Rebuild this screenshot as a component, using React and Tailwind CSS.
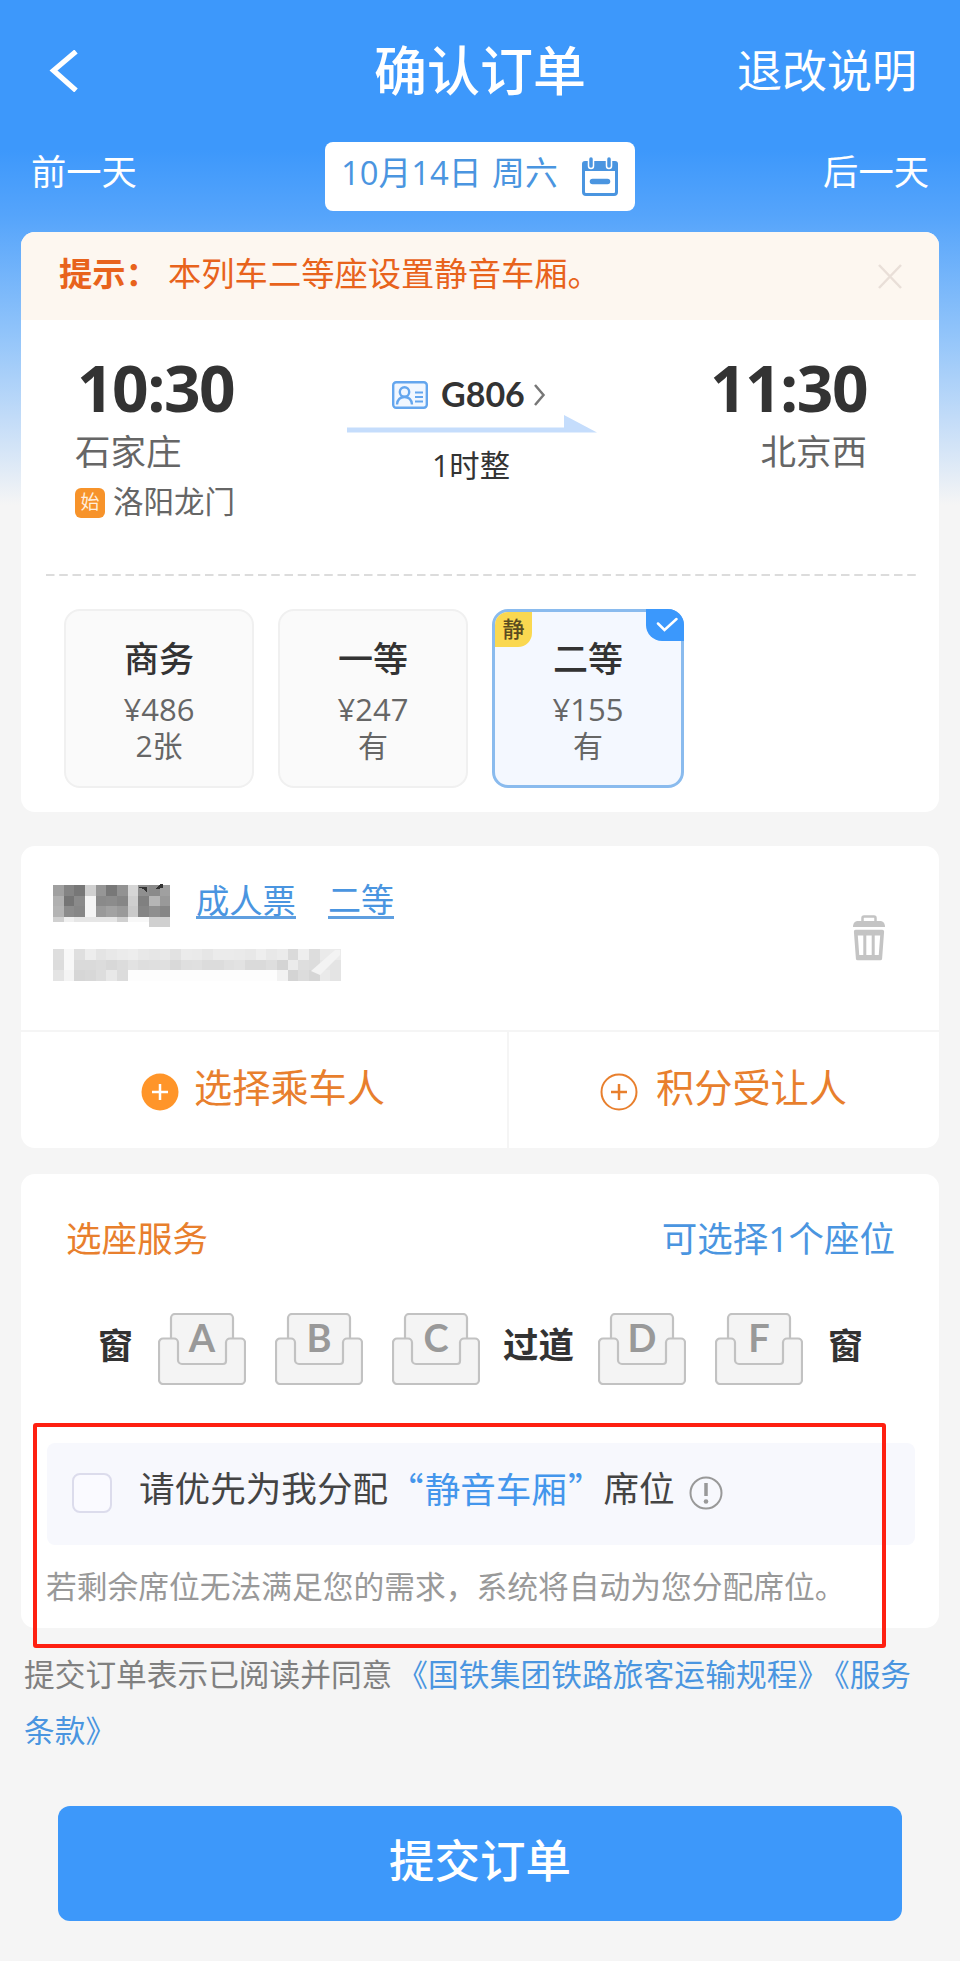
import React from 'react';

const seats = [
  { name: '商务', price: '¥486', left: '2张' },
  { name: '一等', price: '¥247', left: '有' },
  { name: '二等', price: '¥155', left: '有', quiet: true, selected: true },
];

// greys of the masked passenger name and id number, one entry per block
const nameMask = [
  ['#a0a0a0', '#848484', '#777777', '#d0d0d0', '#969696', '#787878', '#929292', '#d6d6d6', '#8f8f8f', '#8a8a8a', '#a0a0a0'],
  ['#b0b0b0', '#757575', '#8a8a8a', '#f5f5f5', '#8a8a8a', '#8c8c8c', '#868686', '#cfcfcf', '#808080', '#b5b5b5', '#999999'],
  ['#b4b4b4', '#8c8c8c', '#878787', '#f5f5f5', '#9a9a9a', '#a2a2a2', '#9a9a9a', '#cacaca', '#858585', '#8f8f8f', '#868686'],
];
const nameMaskTail = ['#d0d0d0', '#f0f0f0', '#e6e6e6', '#e6e6e6', '#e6e6e6', '#e6e6e6', '#d0d0d0', '#f8f8f8', '#f8f8f8', '#d0d0d0', '#d0d0d0'];
const idMask = [
  ['#dedede', '#f8f8f8', '#dfdfdf', '#ededed', '#e4e4e4', '#e8e8e8', '#ebebeb', '#ededed', '#e8e8e8', '#e6e6e6', '#e8e8e8', '#e2e2e2', '#ebebeb', '#eaeaea', '#e6e6e6', '#ebebeb', '#ebebeb', '#eaeaea', '#e8e8e8', '#eeeeee', '#e8e8e8', '#ebebeb', '#dadada', '#eeeeee', '#dddddd', '#eaeaea', '#ebebeb'],
  ['#dcdcdc', '#f8f8f8', '#dadada', '#dadada', '#dcdcdc', '#d8d8d8', '#dcdcdc', '#e2e2e2', '#dedede', '#dfdfdf', '#e0e0e0', '#d9d9d9', '#dfdfdf', '#e0e0e0', '#dcdcdc', '#dcdcdc', '#e0e0e0', '#e2e2e2', '#dadada', '#dadada', '#dedede', '#d4d4d4', '#ebebeb', '#dedede', '#dcdcdc', '#e6e6e6', '#e4e4e4'],
  ['#e4e4e4', '#f4f4f4', '#d6d6d6', '#d8d8d8', '#dddddd', '#e8e8e8', '#dcdcdc', '#fdfdfd', '#fdfdfd', '#fdfdfd', '#fdfdfd', '#fdfdfd', '#fdfdfd', '#fdfdfd', '#fdfdfd', '#fdfdfd', '#fdfdfd', '#fdfdfd', '#fdfdfd', '#fdfdfd', '#fdfdfd', '#f2f2f2', '#d4d4d4', '#dcdcdc', '#d6d6d6', '#eaeaea', '#e4e4e4'],
];

function NameMask() {
  return (
    <svg width="118" height="44" viewBox="0 0 118 44" shapeRendering="crispEdges">
      {nameMask.map((row, y) => row.map((c, x) => (
        <rect key={`${x}-${y}`} x={x * 10.67} y={2 + y * 10.67} width="10.7" height="10.7" fill={c} />
      )))}
      {nameMaskTail.map((c, x) => (
        <rect key={x} x={x * 10.67} y="34" width="10.7" height={x > 8 ? 10 : 5} fill={c} />
      ))}
      <path d="M84 4h10v5l-4-3zM103 6l4-5h3v4z" fill="#333" />
    </svg>
  );
}

function IdMask() {
  return (
    <svg width="288" height="32" viewBox="0 0 288 32" shapeRendering="crispEdges">
      {idMask.map((row, y) => row.map((c, x) => (
        <rect key={`${x}-${y}`} x={x * 10.67} y={y * 10.67} width="10.7" height="10.7" fill={c} />
      )))}
      <path d="M258 22L282 1h5v5l-20 20z" fill="#f3f3f3" shapeRendering="auto" />
    </svg>
  );
}

function CalendarIcon() {
  return (
    <svg width="40" height="40" viewBox="0 0 40 40" fill="none">
      <path d="M3.5 13V35a2.5 2.5 0 0 0 2.5 2.5h28a2.5 2.5 0 0 0 2.5-2.5V13" stroke="#4a95e0" strokeWidth="3" />
      <path d="M2 14V7a3 3 0 0 1 3-3h30a3 3 0 0 1 3 3v7z" fill="#4a95e0" />
      <path d="M11 1v8M29 1v8" stroke="#fff" strokeWidth="6.5" strokeLinecap="round" />
      <path d="M11 2v7M29 2v7" stroke="#4a95e0" strokeWidth="3.5" strokeLinecap="round" />
      <path d="M12.500 24.500h15" stroke="#4a95e0" strokeWidth="5.5" strokeLinecap="round" />
    </svg>
  );
}

function IdCardIcon() {
  return (
    <svg width="36" height="28" viewBox="0 0 36 28" fill="none" stroke="#64a6ee" strokeWidth="2">
      <rect x="1.200" y="1.200" width="33.600" height="25.600" rx="3" fill="#f1f7ff" strokeWidth="2.400" />
      <circle cx="12.500" cy="11" r="4.700" strokeWidth="2.400" />
      <path d="M5 23.500c.5-5 3.500-7.500 7.500-7.500s7 2.500 7.500 7.500" strokeWidth="2.400" />
      <path d="M23 11.500h8M23 16h8M23 20.500h8" />
    </svg>
  );
}

function TrashIcon() {
  return (
    <svg width="34" height="48" viewBox="0 0 34 48" fill="none">
      <path d="M10.500 7V4a1.500 1.500 0 0 1 1.500-1.500h10a1.500 1.500 0 0 1 1.500 1.500v3" stroke="#c4c4c4" strokeWidth="2.500" />
      <path d="M1 13c0-4 2-6 5-6h22c3 0 5 2 5 6z" fill="#c4c4c4" />
      <path d="M3.700 17.500h26.600L28.300 44.500H5.700z" stroke="#c4c4c4" strokeWidth="3.600" strokeLinejoin="round" />
      <path d="M3 16h28v5.500H3zM5 41h24v5H5z" fill="#c4c4c4" />
      <path d="M12.800 18v26M21.200 18v26" stroke="#c4c4c4" strokeWidth="3" />
    </svg>
  );
}

function Seat({ letter }) {
  return (
    <div className="relative h-[72px] w-[88px]">
      <svg width="88" height="72" viewBox="0 0 88 72" fill="#f4f4f4" stroke="#c2c2c2" strokeWidth="2.200">
        <path d="M13 26V5a4 4 0 0 1 4-4h54a4 4 0 0 1 4 4v21L69 51H20z" />
        <path d="M5 25.500h11a4 4 0 0 1 4 4V47a4 4 0 0 0 4 4h41a3 3 0 0 0 3-3V29.500a4 4 0 0 1 4-4h11a4 4 0 0 1 4 4V67a4 4 0 0 1-4 4H5a4 4 0 0 1-4-4V29.500a4 4 0 0 1 4-4z" />
      </svg>
      <span className="absolute inset-x-0 top-[5px] text-center font-['Lato',sans-serif] text-[38px] leading-[38px] font-bold text-[#999]">{letter}</span>
    </div>
  );
}

function SeatClass({ name, price, left, quiet, selected }) {
  return (
    <div className={selected
      ? 'relative h-[179px] w-[192px] rounded-2xl border-[3px] border-[#8abbee] bg-[#f4f8ff] pt-[29px] text-center'
      : 'relative h-[179px] w-[190px] rounded-2xl border-2 border-[#f0f0f0] bg-[#fafafa] pt-[30px] text-center'}
    >
      {quiet && (
        <span className="absolute top-0 left-0 h-[35px] w-[37px] rounded-tl-[13px] rounded-br-[14px] bg-[#fad850] text-center text-[22px] leading-[32px] font-medium text-[#5a4c20]">静</span>
      )}
      {selected && (
        <span className="absolute -top-[3px] -right-[3px] flex h-8 w-[38px] items-center justify-center rounded-tr-2xl rounded-bl-2xl bg-[#3b98fc]">
          <svg className="ml-1" width="22" height="16" viewBox="0 0 22 16" fill="none">
            <path d="M2 6.500L8.500 13L20.500 2" stroke="#fff" strokeWidth="2.500" strokeLinecap="round" />
          </svg>
        </span>
      )}
      <div className="text-[35px] leading-9 font-medium text-[#333]">{name}</div>
      <div className="mt-[14px] text-[31px] leading-9 text-[#666]">{price}</div>
      <div className="mt-px text-[30px] leading-9 text-[#666]">{left}</div>
    </div>
  );
}

export default function App() {
  return (
    <div className="relative h-[1961px] w-[960px] overflow-hidden bg-[#f5f5f5] bg-[linear-gradient(to_bottom,#3d98fb_0px,#3d98fb_150px,#55a4fb_215px,#8fc3fa_330px,#c3dcf8_420px,#f5f5f5_505px)] px-[21px] font-['Open_Sans','Noto_Sans_CJK_SC',sans-serif]">
      {/* Title bar */}
      <header className="flex h-[142px] items-center text-white">
        <div className="w-[353px] pl-[28px]">
          <svg width="30" height="42" viewBox="0 0 30 42" fill="none">
            <path d="M27 1.500L4.500 20.500L27 40.500" stroke="#fff" strokeWidth="5.200" />
          </svg>
        </div>
        <h1 className="-mt-[2px] w-[212px] text-[53px] leading-none font-medium whitespace-nowrap">确认订单</h1>
        <div className="-mt-[2px] ml-auto pr-[22px] text-[45px] leading-none">退改说明</div>
      </header>

      {/* Date switcher */}
      <div className="flex h-[69px] items-center justify-between px-[10px] text-[35.300px] leading-none text-white">
        <span className="-mt-[10px] w-[294px]">前一天</span>
        <div className="flex h-[69px] w-[310px] items-center rounded-lg bg-white pl-[16px] text-[#4a95e0]">
          <span className="-mt-[7px] text-[32.800px] whitespace-pre [word-spacing:2px]">10月14日 周六</span>
          <span className="mr-[15px] ml-auto"><CalendarIcon /></span>
        </div>
        <span className="-mt-[10px] w-[294px] text-right">后一天</span>
      </div>

      {/* Train card */}
      <section className="mt-[21px] h-[580px] overflow-hidden rounded-[14px] bg-white">
        <div className="flex h-[88px] items-center bg-[#fdf7f0] pr-[37px] pb-1 pl-[38px] text-[33.300px] leading-none text-[#e8631c]">
          <span className="w-[109px] font-bold">提示：</span>
          <span>本列车二等座设置静音车厢。</span>
          <svg className="mt-1 ml-auto" width="24" height="25" viewBox="0 0 24 25">
            <path d="M1 1l22 23M23 1L1 24" stroke="#e9dfd8" strokeWidth="2.500" />
          </svg>
        </div>

        <div className="flex h-[254px] justify-between pr-[72px] pl-[54px]">
          <div className="w-[240px] pt-[35px]">
            <div className="pl-[2px] text-[64px] leading-[66px] font-bold tracking-[-1.500px] text-[#333]">10:30</div>
            <div className="mt-[12px] text-[35.500px] leading-9 text-[#666]">石家庄</div>
            <div className="mt-[14px] flex items-center gap-2 text-[30.500px] leading-9 text-[#666]">
              <span className="mt-1 h-[30px] w-[30px] rounded-md bg-[#f7932a] text-center text-[19px] leading-[29px] text-[#ffeedd]">始</span>
              洛阳龙门
            </div>
          </div>
          <div className="w-[250px] pt-[55px]">
            <div className="flex h-[40px] items-center pl-[46px]">
              <IdCardIcon />
              <span className="-mt-[3px] ml-[13px] font-['Lato',sans-serif] text-[34px] leading-none font-bold text-[#333]">G806</span>
              <svg className="ml-[8px]" width="13" height="24" viewBox="0 0 13 24" fill="none">
                <path d="M2 2l8.500 10L2 22" stroke="#777" strokeWidth="2.500" />
              </svg>
            </div>
            <svg className="ml-px" width="250" height="18" viewBox="0 0 250 18">
              <path d="M0 12.500h217V0L250 17.500H0z" fill="#c5ddfc" />
            </svg>
            <div className="mt-[15px] text-center text-[30.300px] leading-9 text-[#333]">1时整</div>
          </div>
          <div className="w-[240px] pt-[35px] text-right">
            <div className="text-[64px] leading-[66px] font-bold tracking-[-1.500px] text-[#333]">11:30</div>
            <div className="mt-[12px] text-[35.500px] leading-9 text-[#666]">北京西</div>
          </div>
        </div>

        <svg className="ml-[25px]" width="872" height="2" viewBox="0 0 872 2">
          <path d="M0 1h872" stroke="#dcdcdc" strokeWidth="2" strokeDasharray="8.500 4.750" />
        </svg>

        <div className="mt-[33px] flex gap-6 pl-[43px]">
          {seats.map((s) => <SeatClass key={s.name} {...s} />)}
        </div>
      </section>

      {/* Passenger card */}
      <section className="mt-[34px] h-[302px] rounded-[14px] bg-white">
        <div className="flex h-[186px] items-start border-b-2 border-[#f5f5f5] pr-[53px] pl-[32px]">
          <div className="pt-[37px]">
            <div className="flex h-11 items-start">
              <NameMask />
              <span className="ml-[25px] h-[36px] border-b-[3px] border-[#5f9fe0] text-[33.300px] leading-[34px] text-[#4a95e0]">成人票</span>
              <span className="ml-[32px] h-[36px] border-b-[3px] border-[#5f9fe0] text-[33px] leading-[34px] text-[#4a95e0]">二等</span>
            </div>
            <div className="mt-[22px]"><IdMask /></div>
          </div>
          <div className="mt-[68px] ml-auto"><TrashIcon /></div>
        </div>
        <div className="flex h-[116px] text-[38.200px] leading-none text-[#e87f2d]">
          <div className="flex w-[488px] items-center border-r-2 border-[#f5f5f5] pl-[120px]">
            <svg className="mt-[3px]" width="38" height="38" viewBox="0 0 38 38">
              <circle cx="19" cy="19" r="18.500" fill="#ff9529" />
              <path d="M11 19h16M19 11v16" stroke="#fff" strokeWidth="2.500" />
            </svg>
            <span className="-mt-[6px] ml-[15px]">选择乘车人</span>
          </div>
          <div className="flex items-center pl-[91px]">
            <svg className="mt-[3px]" width="38" height="38" viewBox="0 0 38 38" fill="none" stroke="#e87f2d" strokeWidth="2">
              <circle cx="19" cy="19" r="17.500" />
              <path d="M11 19h16M19 11v16" strokeWidth="2.500" />
            </svg>
            <span className="-mt-[6px] ml-[18px]">积分受让人</span>
          </div>
        </div>
      </section>

      {/* Seat picker */}
      <section className="mt-[26px] h-[454px] rounded-[14px] bg-white pt-[44px]">
        <div className="flex justify-between pr-[44px] pl-[45px] text-[35.500px] leading-10">
          <span className="text-[#e87f2d]">选座服务</span>
          <span className="text-[#4a95e0]">可选择1个座位</span>
        </div>
        <div className="mt-[55px] flex h-[72px] items-center pl-[77px] text-[35px] leading-none font-bold text-[#333]">
          <span className="-mt-2 w-[60px]">窗</span>
          <div className="flex gap-[29px]">
            <Seat letter="A" />
            <Seat letter="B" />
            <Seat letter="C" />
          </div>
          <span className="-mt-2 ml-[23px] w-[95px] text-[35.500px]">过道</span>
          <div className="flex gap-[29px]">
            <Seat letter="D" />
            <Seat letter="F" />
          </div>
          <span className="-mt-2 ml-[25px]">窗</span>
        </div>

        <div className="mt-[58px] mr-[24px] ml-[26px] flex h-[102px] items-center rounded-lg bg-[#f7f8fd] pb-[8px] pl-[25px] text-[35.600px] leading-none text-[#444]">
          <span className="mt-[6px] mr-[27px] h-10 w-10 rounded-lg border-2 border-[#dcdcec] bg-[#fafaff]" />
          <span className="-mt-[2px]">请优先为我分配</span>
          <span className="-mt-[5px] font-['Noto_Sans_CJK_SC',sans-serif] text-[#4496ec]">“<span className="mx-[1px]">静音车厢</span>”</span>
          <span className="-mt-[2px]">席位</span>
          <svg className="mt-[5px] ml-[14px]" width="34" height="34" viewBox="0 0 34 34" fill="none">
            <circle cx="17" cy="17" r="15.500" stroke="#999" strokeWidth="2" />
            <path d="M17 7v13" stroke="#999" strokeWidth="3.500" />
            <circle cx="17" cy="25.500" r="2.300" fill="#999" />
          </svg>
        </div>
        <p className="mt-[21px] pl-[25px] text-[30.750px] leading-10 whitespace-nowrap text-[#999]">若剩余席位无法满足您的需求，系统将自动为您分配席位。</p>
      </section>

      {/* Terms */}
      <p className="-mr-2 mt-[18px] pl-[3px] text-[30.700px] leading-[56px] whitespace-nowrap text-[#808080]">
        提交订单表示已阅读并同意
        <span className="ml-[5px] tracking-[0.1px] text-[#4a95e0]">《国铁集团铁路旅客运输规程》</span>
        <span className="ml-[6px] text-[#4a95e0]">《服务<br />条款》</span>
      </p>

      <button className="mt-[48px] ml-[37px] block h-[115px] w-[844px] rounded-xl bg-[#3d98fa] pb-[6px] text-[45.500px] leading-none font-medium text-white">提交订单</button>

      {/* Highlight frame around the quiet-carriage option */}
      <div className="absolute top-[1423px] left-[33px] h-[225px] w-[853px] rounded-[3px] border-4 border-[#fe2011]" />
    </div>
  );
}
